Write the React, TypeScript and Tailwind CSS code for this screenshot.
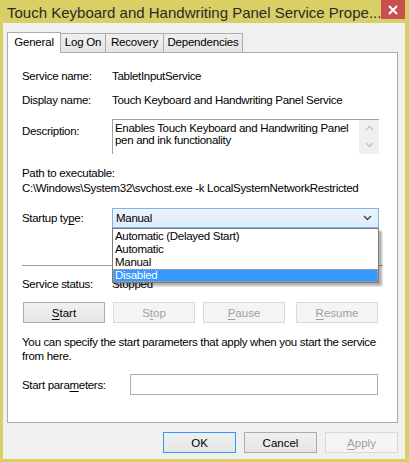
import React from "react";

const font = "font-['Liberation_Sans',Arial,sans-serif]";

function Btn({
  children,
  disabled,
  focused,
  className = "",
}: {
  children: React.ReactNode;
  disabled?: boolean;
  focused?: boolean;
  className?: string;
}) {
  const base = disabled
    ? "border-[#d9d9d9] bg-[#f4f4f4] text-[#a0a0a0]"
    : focused
      ? "border-[#3399ff] bg-gradient-to-b from-[#f0f0f0] to-[#e5e5e5] text-black"
      : "border-[#acacac] bg-gradient-to-b from-[#f0f0f0] to-[#e5e5e5] text-black";
  return (
    <div
      className={`h-[21px] border flex items-center justify-center text-[11.5px] leading-[14px] ${base} ${className}`}
    >
      {children}
    </div>
  );
}

function Key({ children }: { children: React.ReactNode }) {
  return <span className="underline underline-offset-[2px] decoration-1">{children}</span>;
}

function Chevron({ up, color }: { up?: boolean; color: string }) {
  return (
    <svg width="9" height="6" viewBox="0 0 9 6">
      <path
        d={up ? "M1 5 L4.5 1.5 L8 5" : "M1 1 L4.5 4.5 L8 1"}
        fill="none"
        stroke={color}
        strokeWidth="1.4"
      />
    </svg>
  );
}

export default function App() {
  const tabs = [
    { name: "Log On", w: "w-[46px]" },
    { name: "Recovery", w: "w-[59px]" },
    { name: "Dependencies", w: "w-[80px]" },
  ];
  const options = ["Automatic (Delayed Start)", "Automatic", "Manual", "Disabled"];

  return (
    <div className={`w-[409px] h-[462px] bg-[#d8cf65] flex flex-col overflow-hidden ${font}`}>
      {/* title bar */}
      <div className="h-[23px] flex items-start shrink-0">
        <div className="pl-[7px] pt-[4px] text-[15px] leading-[17px] text-[#2a2a2a] whitespace-nowrap">
          Touch Keyboard and Handwriting Panel Service Prope...
        </div>
        <div className="ml-auto mr-[4px] w-[31px] h-[19px] bg-[#c75050] flex items-center justify-center">
          <svg width="10" height="10" viewBox="0 0 10 10">
            <path d="M1 1 L9 9 M9 1 L1 9" stroke="white" strokeWidth="2" />
          </svg>
        </div>
      </div>

      {/* client */}
      <div className="ml-[3px] mr-[4px] mb-[3px] flex-1 bg-[#f0f0f0] flex flex-col">
        {/* tabs */}
        <div className="pt-[9px] pl-[4px] flex items-end h-[30px] relative z-10 -mb-px text-[11.5px] tracking-[-0.2px]">
          <div className="w-[54px] h-[21px] bg-white border border-b-0 border-[#acacac] flex items-center justify-center text-black">
            General
          </div>
          {tabs.map((t) => (
            <div
              key={t.name}
              className={`${t.w} -ml-px h-[19px] mb-px bg-gradient-to-b from-[#f0f0f0] to-[#e5e5e5] border border-b-0 border-[#acacac] flex items-center justify-center text-black`}
            >
              {t.name}
            </div>
          ))}
        </div>

        {/* panel */}
        <div className="ml-[4px] mr-[7px] h-[371px] bg-white border border-[#acacac] text-[11.5px] tracking-[-0.3px] leading-[14px] text-black pl-[14px] pr-[18px] flex flex-col">
          <div className="mt-[16px] flex">
            <div className="w-[90px]">Service name:</div>
            <div>TabletInputService</div>
          </div>
          <div className="mt-[10px] flex">
            <div className="w-[90px]">Display name:</div>
            <div>Touch Keyboard and Handwriting Panel Service</div>
          </div>
          <div className="mt-[12px] flex">
            <div className="w-[90px] pt-[5px]">Description:</div>
            <div className="w-[267px] h-[35px] border-t border-l border-[#a0a0a0] flex">
              <div className="flex-1 pl-[2px] pt-[2px] leading-[12px] whitespace-nowrap">
                Enables Touch Keyboard and Handwriting Panel
                <br />
                pen and ink functionality
              </div>
              <div className="w-[20px] bg-[#f0f0f0] flex flex-col items-center pt-[5px] gap-[11px]">
                <Chevron up color="#c2c2c2" />
                <Chevron color="#c2c2c2" />
              </div>
            </div>
          </div>
          <div className="mt-[12px] leading-[15px]">
            <div>Path to executable:</div>
            <div className="whitespace-nowrap">C:\Windows\System32\svchost.exe -k LocalSystemNetworkRestricted</div>
          </div>
          <div className="mt-[12px] flex items-center relative z-20">
            <div className="w-[90px]">
              Startup ty<Key>p</Key>e:
            </div>
            <div className="w-[267px] h-[20px] border border-[#7eb4ea] bg-gradient-to-b from-[#ecf4fc] to-[#dcecfc] flex items-center pl-[3px] pr-[6px]">
              <span>Manual</span>
              <span className="ml-auto">
                <Chevron color="#404040" />
              </span>
            </div>
            <div className="absolute left-[90px] top-[20px] w-[267px] border border-[#7a7a7a] bg-white shadow-[3px_3px_2px_rgba(0,0,0,0.3)] pt-px">
              {options.map((o, i) => (
                <div
                  key={o}
                  className={`h-[13px] leading-[13px] pl-[2px] ${
                    i === 3
                      ? "bg-[#3399ff] text-white outline-1 outline-dotted outline-[#f0a060] -outline-offset-1"
                      : ""
                  }`}
                >
                  {o}
                </div>
              ))}
            </div>
          </div>
          <div className="mt-[37px] h-px bg-[#a0a0a0] mr-[-4px]" />
          <div className="mt-[11px] flex">
            <div className="w-[90px]">Service status:</div>
            <div>Stopped</div>
          </div>
          <div className="mt-[11px] flex gap-[8px] pl-px tracking-normal">
            <Btn className="w-[82px]">
              <Key>S</Key>tart
            </Btn>
            <Btn disabled className="w-[82px]">
              S<Key>t</Key>op
            </Btn>
            <Btn disabled className="w-[82px]">
              <Key>P</Key>ause
            </Btn>
            <Btn disabled className="w-[82px] ml-[3px]">
              <Key>R</Key>esume
            </Btn>
          </div>
          <div className="mt-[12px] whitespace-nowrap">
            You can specify the start parameters that apply when you start the service
            <br />
            from here.
          </div>
          <div className="mt-[11px] flex items-center">
            <div className="w-[108px]">
              Start para<Key>m</Key>eters:
            </div>
            <div className="w-[248px] h-[21px] border border-[#abadb3] bg-white" />
          </div>
        </div>

        {/* bottom buttons */}
        <div className="mt-[9px] flex justify-end gap-[8px] pr-[7px]">
          <Btn focused className="w-[73px]">OK</Btn>
          <Btn className="w-[73px]">Cancel</Btn>
          <Btn disabled className="w-[73px]">
            <Key>A</Key>pply
          </Btn>
        </div>
      </div>
    </div>
  );
}
